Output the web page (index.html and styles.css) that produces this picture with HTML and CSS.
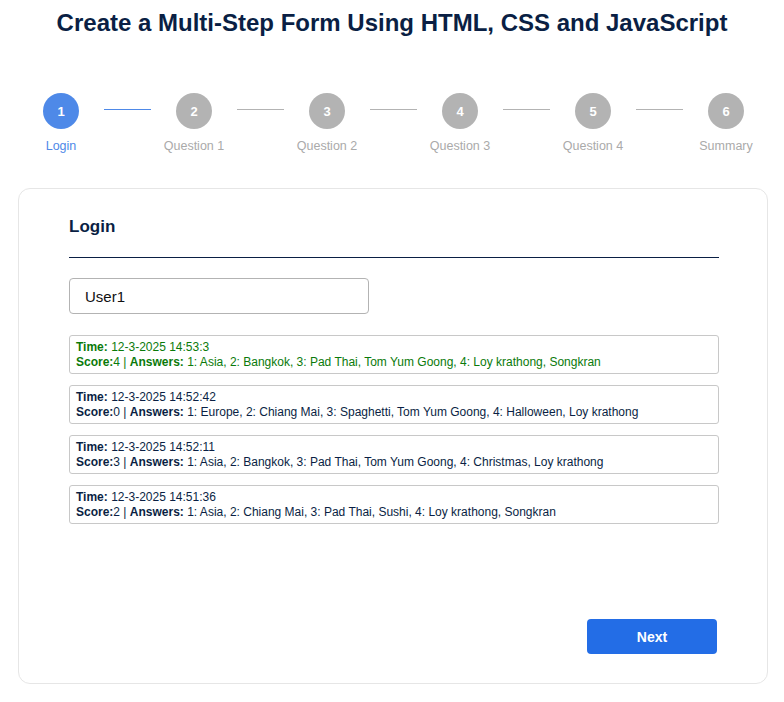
FILE: index.html
```html
<!DOCTYPE html>
<html lang="en">
<head>
<meta charset="utf-8">
<title>Multi-Step Form</title>
<link rel="stylesheet" href="styles.css">
</head>
<body>
<h1 class="title">Create a Multi-Step Form Using HTML, CSS and JavaScript</h1>

<div class="stepper">
  <div class="step active"><div class="circle">1</div><div class="label">Login</div></div>
  <div class="line active"></div>
  <div class="step"><div class="circle">2</div><div class="label">Question 1</div></div>
  <div class="line"></div>
  <div class="step"><div class="circle">3</div><div class="label">Question 2</div></div>
  <div class="line"></div>
  <div class="step"><div class="circle">4</div><div class="label">Question 3</div></div>
  <div class="line"></div>
  <div class="step"><div class="circle">5</div><div class="label">Question 4</div></div>
  <div class="line"></div>
  <div class="step"><div class="circle">6</div><div class="label">Summary</div></div>
</div>

<div class="card">
  <h2 class="card-title">Login</h2>
  <input class="user-input" type="text" value="User1">
  <div class="history">
    <div class="entry latest">
      <div><b>Time:</b> 12-3-2025 14:53:3</div>
      <div><b>Score:</b>4 | <b>Answers:</b> 1: Asia, 2: Bangkok, 3: Pad Thai, Tom Yum Goong, 4: Loy krathong, Songkran</div>
    </div>
    <div class="entry">
      <div><b>Time:</b> 12-3-2025 14:52:42</div>
      <div><b>Score:</b>0 | <b>Answers:</b> 1: Europe, 2: Chiang Mai, 3: Spaghetti, Tom Yum Goong, 4: Halloween, Loy krathong</div>
    </div>
    <div class="entry">
      <div><b>Time:</b> 12-3-2025 14:52:11</div>
      <div><b>Score:</b>3 | <b>Answers:</b> 1: Asia, 2: Bangkok, 3: Pad Thai, Tom Yum Goong, 4: Christmas, Loy krathong</div>
    </div>
    <div class="entry">
      <div><b>Time:</b> 12-3-2025 14:51:36</div>
      <div><b>Score:</b>2 | <b>Answers:</b> 1: Asia, 2: Chiang Mai, 3: Pad Thai, Sushi, 4: Loy krathong, Songkran</div>
    </div>
  </div>
  <div class="actions">
    <button class="btn-next" type="button">Next</button>
  </div>
</div>
</body>
</html>
```
FILE: styles.css
```css
* { box-sizing: border-box; }

body {
  margin: 0;
  background: #ffffff;
  font-family: "Liberation Sans", Arial, Helvetica, sans-serif;
  color: #0a1f44;
}

.title {
  margin: 9px 0 0;
  font-size: 24px;
  font-weight: bold;
  text-align: center;
  color: #0a1f44;
}

.stepper {
  display: flex;
  align-items: flex-start;
  margin-top: 56px;
  padding: 0 40px 0 43px;
}

.step {
  width: 36px;
  flex: none;
  display: flex;
  flex-direction: column;
  align-items: center;
}

.circle {
  width: 36px;
  height: 36px;
  border-radius: 50%;
  background: #b3b3b3;
  color: #ffffff;
  font-size: 13px;
  font-weight: bold;
  display: flex;
  align-items: center;
  justify-content: center;
}

.label {
  margin-top: 10px;
  font-size: 12.5px;
  color: #aaaaaa;
  white-space: nowrap;
}

.step.active .circle { background: #4e89e8; }
.step.active .label { color: #4e89e8; }

.line {
  flex: 1;
  height: 1px;
  margin: 16px 25px 0;
  background: #b3b3b3;
}

.line.active { background: #4e89e8; }

.card {
  width: 750px;
  margin: 35px 0 0 18px;
  border: 1px solid #e6e6e6;
  border-radius: 12px;
  padding: 28px 48px 29px 50px;
}

.card-title {
  margin: 0;
  font-size: 17px;
  font-weight: bold;
  color: #0a1f44;
  padding-bottom: 20px;
  border-bottom: 1px solid #0a1f44;
}

.user-input {
  display: block;
  margin-top: 20px;
  width: 300px;
  height: 36px;
  border: 1px solid #b3b3b3;
  border-radius: 4px;
  padding: 0 15px;
  font-family: "Liberation Sans", Arial, sans-serif;
  font-size: 15px;
  color: #111111;
  background: #ffffff;
}

.history {
  margin-top: 21px;
  display: flex;
  flex-direction: column;
  gap: 11px;
}

.entry {
  border: 1px solid #c8c8c8;
  border-radius: 3px;
  padding: 4px 6px;
  font-size: 12px;
  line-height: 14.5px;
  color: #0a1f44;
}

.entry.latest { color: #0a7a0a; }

.actions {
  margin-top: 95px;
  display: flex;
  justify-content: flex-end;
  padding-right: 2px;
}

.btn-next {
  width: 130px;
  height: 35px;
  border: none;
  border-radius: 4px;
  background: #236de6;
  color: #ffffff;
  font-family: "Liberation Sans", Arial, sans-serif;
  font-size: 14px;
  font-weight: bold;
}
```
